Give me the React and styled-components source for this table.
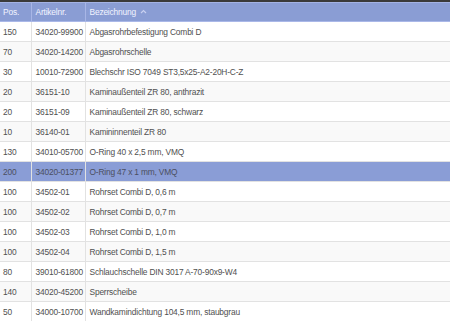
import React from "react";
import styled, { createGlobalStyle } from "styled-components";

const Global = createGlobalStyle`
  html, body { margin: 0; padding: 0; background: #fff; }
  body { font-family: "Liberation Sans", Arial, sans-serif; }
`;

const Wrap = styled.div`
  width: 450px;
  height: 324px;
  overflow: hidden;
  border-top: 2px solid #3a3a3a;
  box-sizing: border-box;
`;

const Table = styled.table`
  width: 100%;
  border-collapse: collapse;
  table-layout: fixed;
  font-size: 8.4px;
  letter-spacing: -0.18px;
  color: #505050;
`;

const Th = styled.th`
  height: 18px;
  padding: 0 0 0 4px;
  text-align: left;
  font-weight: normal;
  color: #f2f4ff;
  background: #8a9dd4;
  border-top: 1px solid #a4b3e4;
  border-bottom: 1px solid #aab8e8;
  border-left: 1px solid #a8b6e6;
  &:first-child { border-left: none; padding-left: 3px; }
  white-space: nowrap;
`;

const Caret = styled.svg`
  margin-left: 4px;
  vertical-align: 1px;
`;

const Tr = styled.tr`
  background: ${(p) => (p.$active ? "#8a9dd6" : p.$odd ? "#f9f9f9" : "#fff")};
  color: ${(p) => (p.$active ? "#4a4f60" : "#505050")};
`;

const Td = styled.td`
  height: 19px;
  padding: 0 0 0 4px;
  border-top: 1px solid #e2e2e2;
  border-left: 1px solid #e2e2e2;
  &:first-child { border-left: none; padding-left: 3px; }
  white-space: nowrap;
  overflow: hidden;
`;

const rows = [
  ["150", "34020-99900", "Abgasrohrbefestigung Combi D"],
  ["70", "34020-14200", "Abgasrohrschelle"],
  ["30", "10010-72900", "Blechschr ISO 7049 ST3,5x25-A2-20H-C-Z"],
  ["20", "36151-10", "Kaminaußenteil ZR 80, anthrazit"],
  ["20", "36151-09", "Kaminaußenteil ZR 80, schwarz"],
  ["10", "36140-01", "Kamininnenteil ZR 80"],
  ["130", "34010-05700", "O-Ring 40 x 2,5 mm, VMQ"],
  ["200", "34020-01377", "O-Ring 47 x 1 mm, VMQ"],
  ["100", "34502-01", "Rohrset Combi D, 0,6 m"],
  ["100", "34502-02", "Rohrset Combi D, 0,7 m"],
  ["100", "34502-03", "Rohrset Combi D, 1,0 m"],
  ["100", "34502-04", "Rohrset Combi D, 1,5 m"],
  ["80", "39010-61800", "Schlauchschelle DIN 3017 A-70-90x9-W4"],
  ["140", "34020-45200", "Sperrscheibe"],
  ["50", "34000-10700", "Wandkamindichtung 104,5 mm, staubgrau"],
];

export default function App() {
  return (
    <>
      <Global />
      <Wrap>
        <Table>
          <colgroup>
            <col style={{ width: 31 }} />
            <col style={{ width: 54 }} />
            <col />
          </colgroup>
          <thead>
            <tr>
              <Th>Pos.</Th>
              <Th>Artikelnr.</Th>
              <Th>
                Bezeichnung
                <Caret width="7" height="5" viewBox="0 0 7 5">
                  <path d="M1 4 L3.5 1.5 L6 4" fill="none" stroke="#c8d0f0" strokeWidth="1.2" />
                </Caret>
              </Th>
            </tr>
          </thead>
          <tbody>
            {rows.map((r, i) => (
              <Tr key={i} $odd={i % 2 === 1} $active={r[1] === "34020-01377"}>
                <Td>{r[0]}</Td>
                <Td>{r[1]}</Td>
                <Td>{r[2]}</Td>
              </Tr>
            ))}
          </tbody>
        </Table>
      </Wrap>
    </>
  );
}
